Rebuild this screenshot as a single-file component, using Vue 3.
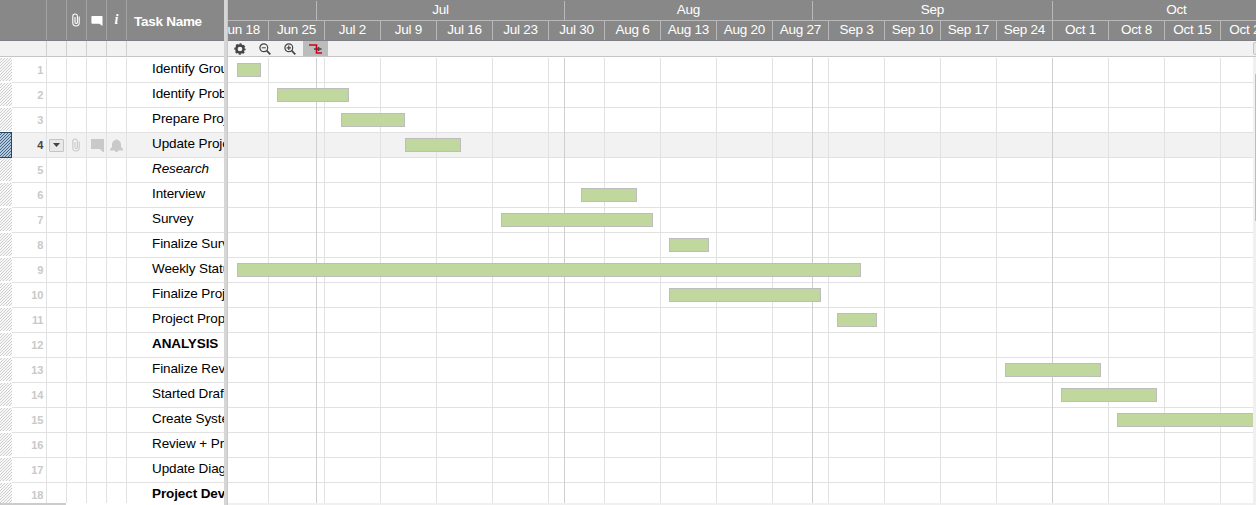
<script setup>
const tasks = [
  { name: 'Identify Group', start: 237, end: 261 },
  { name: 'Identify Problem', start: 277, end: 349 },
  { name: 'Prepare Project', start: 341, end: 405 },
  { name: 'Update Project', start: 405, end: 461, active: true },
  { name: 'Research', kind: 'italic' },
  { name: 'Interview', start: 581, end: 637 },
  { name: 'Survey', start: 501, end: 653 },
  { name: 'Finalize Survey', start: 669, end: 709 },
  { name: 'Weekly Status', start: 237, end: 861 },
  { name: 'Finalize Project', start: 669, end: 821 },
  { name: 'Project Proposal', start: 837, end: 877 },
  { name: 'ANALYSIS', kind: 'bold' },
  { name: 'Finalize Review', start: 1005, end: 1101 },
  { name: 'Started Draft', start: 1061, end: 1157 },
  { name: 'Create System', start: 1117, end: 1300 },
  { name: 'Review + Print' },
  { name: 'Update Diagram' },
  { name: 'Project Development', kind: 'bold' }
]
const origin = 228
const weeks = ['Jun 18', 'Jun 25', 'Jul 2', 'Jul 9', 'Jul 16', 'Jul 23', 'Jul 30', 'Aug 6', 'Aug 13', 'Aug 20', 'Aug 27', 'Sep 3', 'Sep 10', 'Sep 17', 'Sep 24', 'Oct 1', 'Oct 8', 'Oct 15', 'Oct 22']
const months = [
  { name: '', width: 89 },
  { name: 'Jul', width: 248 },
  { name: 'Aug', width: 248 },
  { name: 'Sep', width: 240 },
  { name: 'Oct', width: 248 }
]
</script>

<template>
  <div class="app">
    <section class="sheet">
      <header class="sheet-head">
        <div class="c-num"></div>
        <div class="c-ico"></div>
        <div class="c-ico">
          <svg class="clip" width="10" height="14" viewBox="0 0 10 14"><path d="M8.2 3.6V9.8a3.2 3.2 0 0 1-6.4 0V3.3a2.2 2.2 0 0 1 4.6 0v6a1.2 1.2 0 0 1-2.4 0V4" fill="none" stroke="#fff" stroke-width="1.1" /></svg>
        </div>
        <div class="c-ico">
          <svg class="note" width="12" height="10" viewBox="0 0 12 10"><path d="M1 0H11L11.5 .6V10L8.4 7.8H1L.4 7V.6Z" fill="#fff" /></svg>
        </div>
        <div class="c-ico info">i</div>
        <div class="c-title">Task Name</div>
      </header>
      <div class="sheet-tools"><i class="c-num"></i><i v-for="n in 4" :key="n" class="c-ico"></i></div>
      <div class="rows">
        <div v-for="(t, i) in tasks" :key="i" class="row" :class="{ active: t.active }">
          <div class="hatch"></div>
          <div class="num">{{ i + 1 }}</div>
          <div class="c-ico">
            <span v-if="t.active" class="drop"><svg width="7" height="4"><path d="M0 0H7L3.5 4Z" fill="#444" /></svg></span>
          </div>
          <div class="c-ico">
            <svg v-if="t.active" class="clip" width="10" height="14" viewBox="0 0 10 14"><path d="M8.2 3.6V9.8a3.2 3.2 0 0 1-6.4 0V3.3a2.2 2.2 0 0 1 4.6 0v6a1.2 1.2 0 0 1-2.4 0V4" fill="none" stroke="#c9c9c9" stroke-width="1.1" /></svg>
          </div>
          <div class="c-ico">
            <svg v-if="t.active" class="chat" width="13" height="13" viewBox="0 0 13 13"><path d="M0 0H13V13H12L8.8 10H0Z" fill="#c9c9c9" /></svg>
          </div>
          <div class="c-ico">
            <svg v-if="t.active" class="bell" width="13" height="13" viewBox="0 0 13 13"><path d="M5.2 1.2Q6.5-.8 7.8 1.2Q11 2 11 5.5V8L13 10V11.5H8.3Q8 13 6.5 13Q5 13 4.7 11.5H0V10L2 8V5.5Q2 2 5.2 1.2Z" fill="#c9c9c9" /></svg>
          </div>
          <div class="name" :class="t.kind">{{ t.name }}</div>
        </div>
      </div>
      <div class="foot"></div>
    </section>
    <div class="divider"></div>
    <section class="gantt">
      <header class="gantt-head">
        <div class="months"><div v-for="(m, i) in months" :key="i" :style="{ width: m.width + 'px' }">{{ m.name }}</div></div>
        <div class="weeks"><div v-for="w in weeks" :key="w">{{ w }}</div></div>
      </header>
      <div class="tools">
        <span class="tool"><svg width="12" height="12" viewBox="0 0 12 12"><circle cx="6" cy="6" r="3.6" fill="none" stroke="#444" stroke-width="2.5" /><circle cx="6" cy="6" r="5" fill="none" stroke="#444" stroke-width="1.4" stroke-dasharray="2.1 1.827" stroke-dashoffset="1.05" /></svg></span>
        <span class="tool"><svg width="12" height="12" viewBox="0 0 12 12"><g fill="none" stroke="#444"><circle cx="4.8" cy="4.8" r="3.9" stroke-width="1.2" /><path d="M2.8 4.8H6.8" /><path d="M7.7 7.7L11.3 11.3" stroke-width="1.7" /></g></svg></span>
        <span class="tool"><svg width="12" height="12" viewBox="0 0 12 12"><g fill="none" stroke="#444"><circle cx="4.8" cy="4.8" r="3.9" stroke-width="1.2" /><path d="M2.6 4.8H7M4.8 2.6V7" stroke-width="1.2" /><path d="M7.7 7.7L11.3 11.3" stroke-width="1.7" /></g></svg></span>
        <span class="tool on"><svg width="13" height="10" viewBox="0 0 13 10"><path d="M5 5H12.5M9.5 3V7" stroke="#444" stroke-width="1.6" /><path d="M0 1H7.5V9H13" fill="none" stroke="#d0021b" stroke-width="1.6" /></svg></span>
        <span class="toggle"></span>
      </div>
      <div class="body">
        <div class="chart">
          <div class="layer lines">
            <div v-for="(t, i) in tasks" :key="i" :class="{ active: t.active }"></div>
          </div>
          <div class="layer week-lines"><i v-for="w in weeks" :key="w"></i></div>
          <div class="layer month-lines"><i v-for="(m, i) in months" :key="i" :style="{ width: m.width + 'px' }"></i></div>
          <div class="layer bars">
            <div v-for="(t, i) in tasks" :key="i">
              <b v-if="t.start" :style="{ marginLeft: t.start - origin + 'px', width: t.end - t.start + 'px' }"></b>
            </div>
          </div>
        </div>
        <div class="scroll"><i></i></div>
      </div>
      <div class="hscroll"></div>
    </section>
  </div>
</template>

<style>
body { margin: 0; overflow: hidden; }
</style>

<style scoped>
* { box-sizing: border-box; }
.app { display: flex; width: 1256px; height: 505px; overflow: hidden; background: #fff; font: 13px/15px "Liberation Sans", Arial, sans-serif; color: #000; white-space: nowrap; }
.sheet { width: 224px; overflow: hidden; display: flex; flex-direction: column; }
.sheet-head { height: 41px; flex: none; display: flex; background: #888; border-bottom: 1px solid #7e7f86; color: #fff; }
.c-num { width: 47px; border-right: 1px solid #a3a3a3; flex: none; }
.c-ico { width: 20px; border-right: 1px solid #a3a3a3; flex: none; display: flex; align-items: center; justify-content: center; }
.clip { margin-left: -1px; }
.note { margin-top: 2px; }
.info { font: italic bold 14px "Liberation Serif", serif; }
.c-title { padding: 14px 0 0 7px; font-weight: bold; font-size: 13.5px; letter-spacing: -.27px; }
.sheet-tools { height: 16px; flex: none; display: flex; background: #f2f2f2; border-bottom: 1px solid #c6c6c6; }
.sheet-tools i { border-color: #d0d0d0; }
.rows { flex: none; height: 446px; overflow: hidden; }
.row { height: 25px; display: flex; }
.row:first-child, .lines div:first-child { height: 26px; padding-top: 1px; }
.bars div:first-child { height: 26px; }
.row > div { border-bottom: 1px solid #e2e2e2; }
.row .c-ico { border-right-color: #e2e2e2; }
.row .hatch { width: 12px; flex: none; border-bottom: 2px solid #fff; background: repeating-linear-gradient(135deg, #f7f7f7 0 1.1px, #cfcfcf 1.1px 2.12px); background-clip: padding-box; }
.num { width: 35px; flex: none; border-right: 1px solid #e2e2e2; padding: 5px 3px 0 0; text-align: right; font-size: 11px; font-weight: bold; letter-spacing: -.3px; line-height: 14px; color: #c9c9c9; }
.name { flex: 1; min-width: 0; padding: 3px 0 0 25px; font-size: 13.5px; letter-spacing: -.1px; overflow: hidden; }
.italic { font-style: italic; }
.bold { font-weight: bold; }
.row.active { background: #f2f2f2; }
.row.active .num { color: #444; }
.row.active .hatch { height: 26px; margin-top: -1px; border: 1px solid #24476b; border-left: 0; background: repeating-linear-gradient(135deg, #b5c8da 0 .9px, #3f668c .9px 2.12px); z-index: 1; }
.drop { width: 15px; height: 13px; border: 1px solid #c4c4c4; background: #e9e9e9; display: flex; align-items: center; justify-content: center; border-radius: 1px; }
.chat { margin: 1px 0 0 2px; }
.foot { height: 2px; width: 66px; flex: none; background: #ccc; }
.divider { width: 4px; background: #d6d6d6; border-right: 1px solid #c8c8c8; flex: none; }
.gantt { flex: 1; min-width: 0; overflow: hidden; display: flex; flex-direction: column; }
.gantt-head { height: 41px; flex: none; background: #888; border-bottom: 1px solid #7e7f86; color: #fff; text-align: center; overflow: hidden; font-size: 13.5px; letter-spacing: -.25px; }
.months { height: 21px; padding-top: 1px; display: flex; border-bottom: 1px solid #b9b9b9; }
.months div { flex: none; border-right: 1px solid #b9b9b9; padding-top: 1px; }
.weeks { height: 19px; display: flex; margin-left: -15px; }
.weeks div { width: 56px; flex: none; border-right: 1px solid #b9b9b9; padding-top: 1px; }
.tools { height: 16px; flex: none; display: flex; background: #f2f2f2; border-bottom: 1px solid #c6c6c6; }
.tool { width: 25px; display: flex; align-items: center; justify-content: center; }
.tool:not(.on) svg { margin-left: -1px; }
.tool.on { background: #bcbcbc; }
.tool.on svg { margin-top: 1px; }
.toggle { margin: 1px -8px 1px auto; width: 11px; border: 1px solid #c4c4c4; border-radius: 2px; background: #e8e8e8; }
.body { flex: none; height: 446px; display: flex; }
.chart { width: 1025px; display: grid; overflow: hidden; height: 446px; grid-template: 446px / 1025px; }
.layer { grid-area: 1 / 1; min-width: 0; overflow: hidden; }
.lines div { height: 25px; border-bottom: 1px solid #e2e2e2; }
.lines .active { background: #f2f2f2; }
.week-lines, .month-lines { display: flex; padding-top: 1px; }
.week-lines i { width: 56px; flex: none; border-right: 1px solid #e2e2e2; }
.week-lines i:first-child { width: 41px; }
.month-lines i { flex: none; border-right: 1px solid #cfcfcf; }
.bars div { height: 25px; padding-top: 5px; }
.bars div:first-child { padding-top: 6px; }
.bars b { display: block; height: 14px; border: 1px solid #bdbdbd; background: #c0d89d; }
.scroll { width: 3px; background: #f0f0f0; padding: 17px 0 0 2px; }
.scroll i { display: block; width: 1px; height: 147px; background: #bdbdbd; }
.hscroll { height: 2px; background: #f0f0f0; }
</style>
